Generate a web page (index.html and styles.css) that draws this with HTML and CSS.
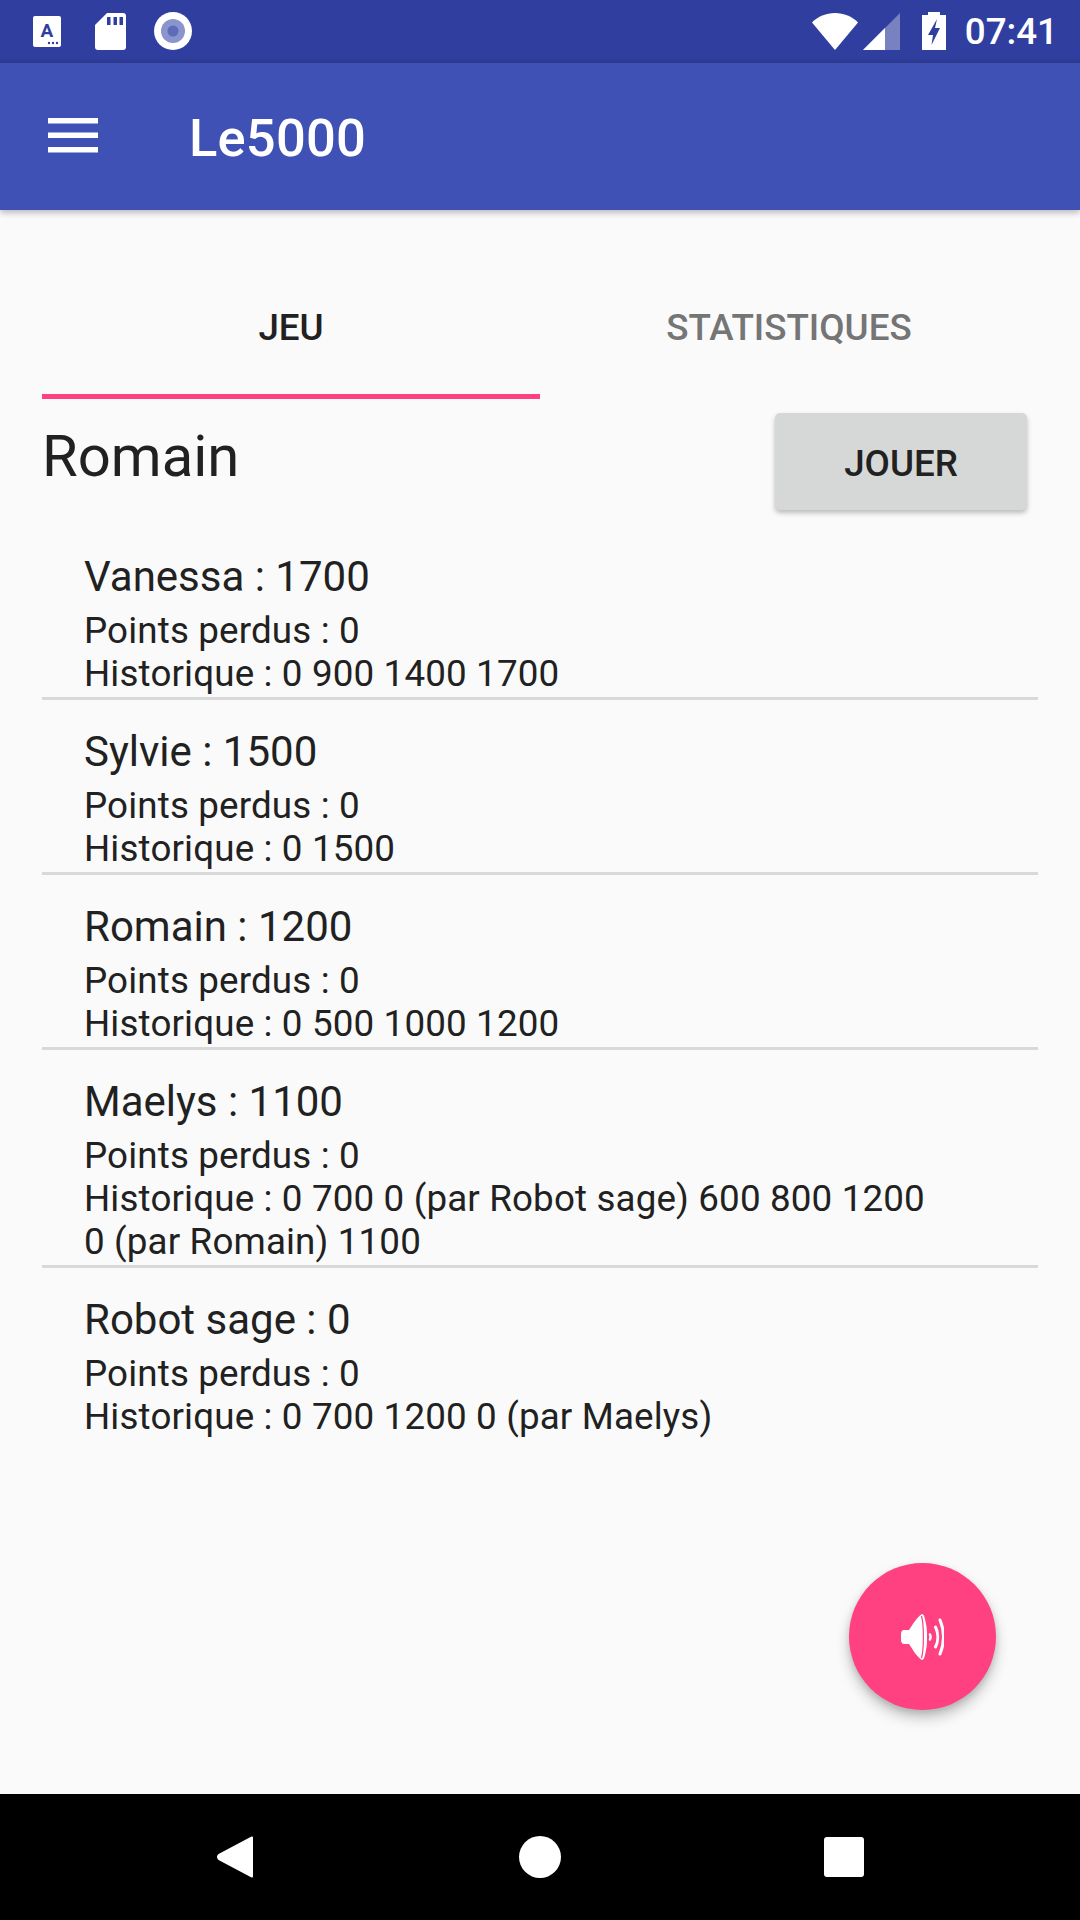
FILE: index.html
```html
<!DOCTYPE html>
<html lang="fr">
<head>
<meta charset="utf-8">
<title>Le5000</title>
<link rel="stylesheet" href="styles.css">
</head>
<body>
<div class="app">
  <div class="statusbar">
    <div class="status-left">
      <svg class="ic-a" viewBox="0 0 28 31"><rect width="28" height="31" rx="2" fill="#fff"/><text x="14" y="21" text-anchor="middle" class="ic-a-letter">A</text><circle cx="16" cy="27" r="1.2" fill="#303f9f"/><circle cx="20" cy="27" r="1.2" fill="#303f9f"/><circle cx="24" cy="27" r="1.2" fill="#303f9f"/></svg>
      <svg class="ic-sd" viewBox="0 0 31 37"><path d="M12 0H28a3 3 0 0 1 3 3V34a3 3 0 0 1-3 3H3a3 3 0 0 1-3-3V12Z" fill="#fff"/><path d="M12 4h3.500v8H12zM18.500 4h3.500v8h-3.500zM24.500 4h3.500v8h-3.500z" fill="#303f9f"/></svg>
      <svg class="ic-rec" viewBox="0 0 38 38"><circle cx="19" cy="19" r="19" fill="#fff"/><circle cx="19" cy="19" r="12" fill="#8a94cd"/><circle cx="19" cy="19" r="5.500" fill="#5d6bb9"/></svg>
    </div>
    <div class="status-right">
      <svg class="ic-wifi" viewBox="0 0 46 37"><path d="M0 9.500C6 3.500 14 0 23 0s17 3.500 23 9.500L23 37Z" fill="#fff"/></svg>
      <svg class="ic-signal" viewBox="0 0 37 37"><path d="M37 0V37H0Z" fill="#fff" fill-opacity=".35"/><path d="M22 15V37H0Z" fill="#fff"/></svg>
      <svg class="ic-batt" viewBox="0 0 24 38"><path d="M6 0H18V3H24V38H0V3H6Z" fill="#fff"/><path d="M15 7 6 23H11L9.500 33 18 16H13Z" fill="#303f9f"/></svg>
      <span class="clock">07:41</span>
    </div>
  </div>
  <header class="appbar">
    <svg class="ic-menu" viewBox="0 0 50 35"><path d="M0 0H50V5.500H0ZM0 14.500H50V20H0ZM0 29H50V34.500H0Z" fill="#fff"/></svg>
    <h1 class="title">Le5000</h1>
  </header>
  <main class="content">
    <nav class="tabs">
      <div class="tab tab-active">JEU</div>
      <div class="tab">STATISTIQUES</div>
    </nav>
    <div class="round">
      <div class="round-name">Romain</div>
      <button class="play">JOUER</button>
    </div>
    <ul class="players">
      <li class="player">
        <div class="player-score">Vanessa : 1700</div>
        <div class="player-line">Points perdus : 0</div>
        <div class="player-line">Historique : 0 900 1400 1700</div>
      </li>
      <li class="player">
        <div class="player-score">Sylvie : 1500</div>
        <div class="player-line">Points perdus : 0</div>
        <div class="player-line">Historique : 0 1500</div>
      </li>
      <li class="player">
        <div class="player-score">Romain : 1200</div>
        <div class="player-line">Points perdus : 0</div>
        <div class="player-line">Historique : 0 500 1000 1200</div>
      </li>
      <li class="player player-long">
        <div class="player-score">Maelys : 1100</div>
        <div class="player-line">Points perdus : 0</div>
        <div class="player-line">Historique : 0 700 0 (par Robot sage) 600 800 1200<br>0 (par Romain) 1100</div>
      </li>
      <li class="player player-last">
        <div class="player-score">Robot sage : 0</div>
        <div class="player-line">Points perdus : 0</div>
        <div class="player-line">Historique : 0 700 1200 0 (par Maelys)</div>
      </li>
    </ul>
    <button class="fab" aria-label="Son">
      <svg class="ic-sound" viewBox="0 0 43 46"><path d="M3 16H8C12 10 16 3 21 0C23 0 24 4 25 10C26 14 26 18 26 23C26 28 26 32 25 36C24 42 23 46 21 46C16 43 12 36 8 30H3C1 30 0 28 0 26V20C0 18 1 16 3 16Z" fill="#fff"/><path d="M20.500 2C23 10 23 36 20.500 44" stroke="#ff4081" stroke-width="1.200" fill="none"/><path d="M29 20.500C29.800 22 29.800 24 29 25.500" stroke="#fff" stroke-width="2.600" fill="none" stroke-linecap="round"/><path d="M34.500 13C37.500 19 37.500 27 34.500 33" stroke="#fff" stroke-width="3" fill="none" stroke-linecap="round"/><path d="M39 6C43.500 17 43.500 29 39 40" stroke="#fff" stroke-width="3" fill="none" stroke-linecap="round"/></svg>
    </button>
  </main>
  <footer class="navbar">
    <svg class="ic-back" viewBox="0 0 37 42"><path d="M35 1.500V40.500L2 23Q0 21 2 19Z" fill="#fff" stroke="#fff" stroke-width="2" stroke-linejoin="round"/></svg>
    <span class="ic-home"></span>
    <span class="ic-recents"></span>
  </footer>
</div>
</body>
</html>
```
FILE: styles.css
```css
* { box-sizing: border-box; }
html, body { margin: 0; padding: 0; }
body { font-family: Roboto, "Noto Sans", sans-serif; color: #212121; background: #fafafa; }
.app { width: 1080px; height: 1920px; display: flex; flex-direction: column; overflow: hidden; }

.statusbar { height: 63px; flex: none; background: linear-gradient(#303f9f 0 57px, #2c3a92 63px); display: flex; justify-content: space-between; color: #fff; }
.status-left { display: flex; align-items: flex-start; }
.status-right { display: flex; align-items: flex-start; }
.ic-a { width: 28px; height: 31px; margin: 16px 0 0 33px; }
.ic-a-letter { font: 700 19px Roboto, sans-serif; fill: #303f9f; }
.ic-sd { width: 31px; height: 37px; margin: 13px 0 0 34px; }
.ic-rec { width: 38px; height: 38px; margin: 12px 0 0 28px; }
.ic-wifi { width: 46px; height: 37px; margin-top: 13px; }
.ic-signal { width: 37px; height: 37px; margin: 13px 0 0 5px; }
.ic-batt { width: 24px; height: 38px; margin: 12px 0 0 22px; }
.clock { font-size: 36.75px; font-weight: 500; line-height: 63px; margin: 0 22px 0 19px; }

.appbar { height: 147px; flex: none; background: #3f51b5; display: flex; align-items: center; box-shadow: 0 3px 6px rgba(0,0,0,.25); position: relative; z-index: 1; }
.ic-menu { width: 50px; height: 35px; margin: 0 0 2px 48px; }
.title { margin: 3px 0 0 91px; font-size: 52.5px; font-weight: 500; color: #fff; line-height: 1; letter-spacing: .2px; }

.content { flex: 1; position: relative; background: #fafafa; min-height: 0; }
.tabs { display: flex; margin: 0 42px; padding-top: 63px; }
.tab { flex: 1; padding-top: 30px; text-align: center; font-size: 36.75px; font-weight: 500; line-height: 50px; color: #757575; border-bottom: 5px solid transparent; box-sizing: content-box; height: 91px; }
.tab-active { color: #212121; border-bottom-color: #ff4081; }

.round { display: flex; justify-content: space-between; align-items: flex-start; margin: 0 53px 0 42px; padding-top: 14px; }
.round-name { font-size: 58px; line-height: 68px; margin-top: 9px; }
.play { width: 252px; height: 97px; border: 0; border-radius: 5px; background: #d6d7d7; color: #212121; font: 500 36.75px Roboto, sans-serif; box-shadow: 0 3px 5px rgba(0,0,0,.25); padding: 3px 0 0; }

.players { list-style: none; margin: 15px 42px 0; padding: 0; }
.player { padding: 24px 0 0 42px; height: 175px; border-bottom: 3px solid #d9d9d9; }
.player-long { height: 218px; }
.player-last { border-bottom: 0; }
.player-score { font-size: 42px; line-height: 56px; margin-bottom: 4px; }
.player-line { font-size: 36.75px; line-height: 43px; letter-spacing: .15px; }

.fab { position: absolute; left: 849px; top: 1353px; width: 147px; height: 147px; border: 0; padding: 0; border-radius: 50%; background: #ff4081; box-shadow: 0 8px 14px rgba(0,0,0,.22), 0 3px 6px rgba(0,0,0,.12); display: flex; align-items: center; justify-content: center; }
.ic-sound { width: 43px; height: 46px; }

.navbar { height: 126px; flex: none; background: #000; display: flex; align-items: center; position: relative; }
.ic-back { width: 37px; height: 42px; margin-left: 217px; }
.ic-home { width: 42px; height: 42px; border-radius: 50%; background: #fff; margin-left: 265px; }
.ic-recents { width: 40px; height: 40px; border-radius: 3px; background: #fff; margin-left: 263px; }
```
